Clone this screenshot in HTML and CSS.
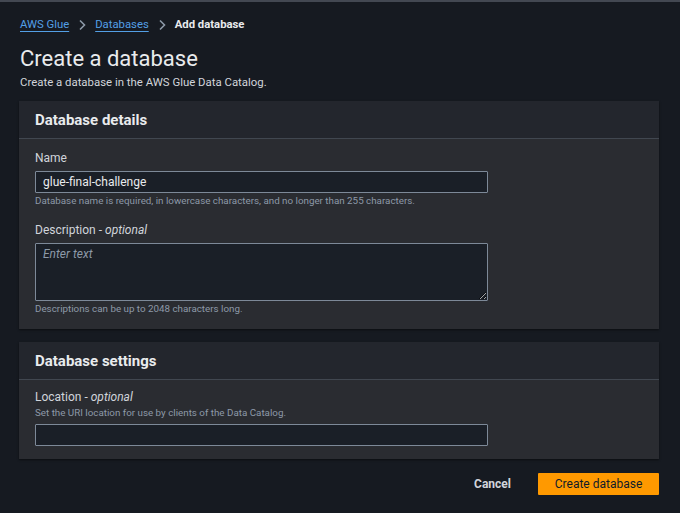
FILE: index.html
```html
<!DOCTYPE html>
<html lang="en">
<head>
<meta charset="utf-8">
<title>Create a database</title>
<link rel="stylesheet" href="styles.css">
</head>
<body>
<main class="page">
  <nav class="crumbs">
    <a class="crumb-link" href="#">AWS Glue</a>
    <svg class="chev" width="10" height="12" viewBox="0 0 10 12"><path d="M3 1.5 L7.5 6 L3 10.5" fill="none" stroke="#8d99a8" stroke-width="1.6"/></svg>
    <a class="crumb-link" href="#">Databases</a>
    <svg class="chev" width="10" height="12" viewBox="0 0 10 12"><path d="M3 1.5 L7.5 6 L3 10.5" fill="none" stroke="#8d99a8" stroke-width="1.6"/></svg>
    <span class="crumb-current">Add database</span>
  </nav>
  <h1 class="title">Create a database</h1>
  <p class="subtitle">Create a database in the AWS Glue Data Catalog.</p>

  <section class="card">
    <h2 class="card-head">Database details</h2>
    <div class="card-body">
      <div class="field">
        <label class="label">Name</label>
        <input class="input" type="text" value="glue-final-challenge">
        <div class="help">Database name is required, in lowercase characters, and no longer than 255 characters.</div>
      </div>
      <div class="field">
        <label class="label">Description - <i>optional</i></label>
        <textarea class="textarea" placeholder="Enter text"></textarea>
        <div class="help">Descriptions can be up to 2048 characters long.</div>
      </div>
    </div>
  </section>

  <section class="card">
    <h2 class="card-head">Database settings</h2>
    <div class="card-body">
      <div class="field">
        <label class="label">Location - <i>optional</i></label>
        <div class="help help-top">Set the URI location for use by clients of the Data Catalog.</div>
        <input class="input" type="text">
      </div>
    </div>
  </section>

  <div class="actions">
    <button class="btn-link">Cancel</button>
    <button class="btn-primary">Create database</button>
  </div>
</main>
</body>
</html>
```

FILE: styles.css
```css
html, body {
  margin: 0;
  padding: 0;
}
body {
  background: #161a21;
  border-top: 2px solid #434852;
  font-family: Roboto, "Liberation Sans", Arial, sans-serif;
  color: #d1d5db;
  height: 511px;
  overflow: hidden;
}
.page {
  width: 640px;
  padding: 0 21px 0 19px;
}
.crumbs {
  display: flex;
  align-items: center;
  gap: 6px;
  padding: 15px 0 0 1px;
  height: 16px;
  line-height: 16px;
  font-size: 11.3px;
}
.crumb-link {
  color: #539fe5;
  text-decoration: underline;
  text-underline-offset: 3px;
}
.chev {
  margin: 0 2px;
}
.crumb-current {
  color: #e9ebed;
  font-weight: bold;
}
.title {
  margin: 12px 0 0 1px;
  font-size: 22px;
  line-height: 28px;
  font-weight: normal;
  color: #e9ebed;
}
.subtitle {
  margin: 1px 0 0 1px;
  font-size: 11.4px;
  line-height: 16px;
  color: #d1d5db;
}
.card {
  margin-top: 11px;
  background: #2a2c31;
  box-shadow: 0 1px 2px rgba(0,0,0,0.5);
}
.card + .card {
  margin-top: 13px;
}
.card-head {
  margin: 0;
  padding: 9px 16px 8px;
  font-size: 15px;
  line-height: 20px;
  font-weight: bold;
  color: #e9ebed;
  background: #23262d;
  border-bottom: 1px solid #414750;
}
.card-body {
  padding: 11px 16px 13px;
  display: flex;
  flex-direction: column;
  gap: 14px;
}
.card + .card .card-body {
  padding-top: 9px;
}
.field {
  display: flex;
  flex-direction: column;
}
.label {
  font-size: 12px;
  line-height: 16px;
  color: #d1d5db;
  margin-bottom: 5px;
}
.label i {
  color: #d1d5db;
}
.input, .textarea {
  box-sizing: border-box;
  width: 453px;
  background: #1a1f27;
  border: 1px solid #7d8998;
  border-radius: 1px;
  color: #e9ebed;
  font-family: Roboto, "Liberation Sans", Arial, sans-serif;
  font-size: 12px;
  padding: 0 7px;
  outline: none;
  margin: 0;
}
.input {
  height: 22px;
}
.textarea {
  height: 58px;
  padding-top: 3px;
  resize: vertical;
  display: block;
}
.textarea::placeholder {
  color: #8d99a8;
  font-style: italic;
}
.help {
  font-size: 9.8px;
  line-height: 14px;
  color: #8d99a8;
  margin-top: 1px;
}
.help-top {
  margin: -4px 0 4px;
}
.actions {
  display: flex;
  justify-content: flex-end;
  align-items: center;
  gap: 27px;
  margin-top: 14px;
}
.btn-link {
  background: none;
  border: none;
  padding: 0;
  font-family: Roboto, "Liberation Sans", Arial, sans-serif;
  font-size: 12px;
  font-weight: bold;
  color: #d1d5db;
}
.btn-primary {
  width: 121px;
  height: 22px;
  background: #ff9900;
  border: none;
  border-radius: 1px;
  padding: 0;
  font-family: Roboto, "Liberation Sans", Arial, sans-serif;
  font-size: 12px;
  color: #0f1b2a;
}
```
